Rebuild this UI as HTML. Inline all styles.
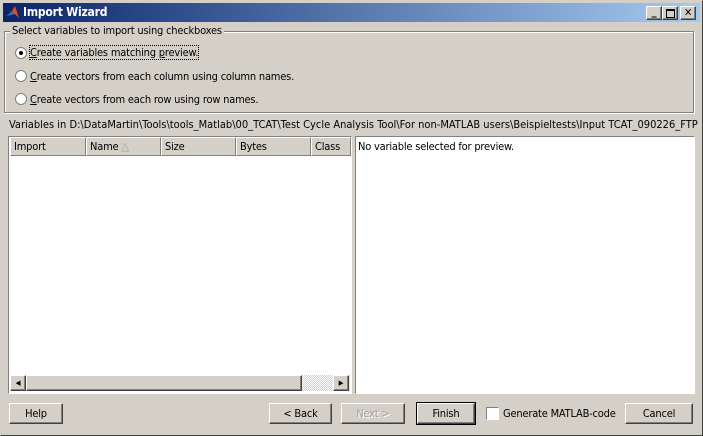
<html><head><style>
body{margin:0;width:703px;height:436px;background:#d4d0c8;font-family:Tahoma,"DejaVu Sans Condensed","Liberation Sans",sans-serif;font-size:11px;position:relative;overflow:hidden;letter-spacing:-0.2px}
.a{position:absolute}
.btn{position:absolute;height:21px;background:#d4d0c8;border:1px solid;border-color:#fff #404040 #404040 #fff;box-shadow:inset -1px -1px 0 #808080;text-align:center;line-height:20px;box-sizing:border-box}
.rad{position:absolute;left:15px;width:12px;height:12px;border-radius:50%;background:#fff;border:1px solid #808080;box-sizing:border-box}
.hd{position:absolute;top:0;height:19px;border:1px solid;border-color:#fff #808080 #808080 #fff;box-sizing:border-box;padding-left:3px;line-height:18px;background:#d4d0c8}
</style></head><body>
<div class="a" style="left:0;top:0;width:701px;height:434px;border:1px solid;border-color:#d4d0c8 #404040 #404040 #d4d0c8"></div>
<div class="a" style="left:3px;top:3px;width:697px;height:19px;background:linear-gradient(90deg,#0a246a,#a6caf0)"></div>
<svg class="a" style="left:6px;top:5px" width="14" height="14"><path d="M1 11 L6 6 L9 1 L13 13 L9 9 Z" fill="#e05010"/><path d="M1 11 L6 6 L8 9Z" fill="#3070c0"/></svg>
<div class="a" style="left:23px;top:5px;color:#fff;font-weight:bold;font-size:12px">Import Wizard</div>
<div class="btn" style="left:646px;top:6px;width:16px;height:14px;line-height:10px;font-weight:bold">_</div>
<div class="btn" style="left:662px;top:6px;width:16px;height:14px"><div class="a" style="left:3px;top:2px;width:7px;height:6px;border:1px solid #000;border-top-width:2px"></div></div>
<div class="btn" style="left:680px;top:6px;width:16px;height:14px;line-height:12px;font-weight:bold">✕</div>
<div class="a" style="left:4px;top:31px;width:688px;height:80px;border:1px solid #808080;box-shadow:1px 1px 0 #fff,inset 1px 1px 0 #fff"></div>
<div class="a" style="left:10px;top:24px;background:#d4d0c8;padding:0 2px">Select variables to import using checkboxes</div>
<div class="rad" style="top:47px"><div class="a" style="left:3px;top:3px;width:4px;height:4px;border-radius:50%;background:#000"></div></div>
<div class="a" style="left:30px;top:46px;outline:1px dotted #000"><u>C</u>reate variables matching <u>p</u>review.</div>
<div class="rad" style="top:70px"></div>
<div class="a" style="left:30px;top:70px"><u>C</u>reate vectors from each column using column names.</div>
<div class="rad" style="top:93px"></div>
<div class="a" style="left:30px;top:93px"><u>C</u>reate vectors from each row using row names.</div>
<div class="a" style="left:9px;top:118px;white-space:nowrap;letter-spacing:0">Variables in D:\DataMartin\Tools\tools_Matlab\00_TCAT\Test Cycle Analysis Tool\For non-MATLAB users\Beispieltests\Input TCAT_090226_FTP</div>
<div class="a" style="left:8px;top:136px;width:344px;height:258px;background:#fff;border:1px solid;border-color:#808080 #fff #fff #808080;box-sizing:border-box">
<div class="hd" style="left:1px;width:76px">Import</div>
<div class="hd" style="left:77px;width:75px">Name <span style="color:#a0a0a0">△</span></div>
<div class="hd" style="left:152px;width:75px">Size</div>
<div class="hd" style="left:227px;width:75px">Bytes</div>
<div class="hd" style="left:302px;width:40px">Class</div>
<div class="a" style="left:1px;top:238px;width:340px;height:16px;background:#e8e6e0"></div>
<div class="btn" style="left:1px;top:238px;width:16px;height:16px;font-size:7px;line-height:14px">◀</div>
<div class="btn" style="left:17px;top:238px;width:276px;height:16px"></div>
<div class="a" style="left:293px;top:238px;width:31px;height:16px;background:repeating-conic-gradient(#fff 0 25%,#d4d0c8 0 50%) 0 0/2px 2px"></div>
<div class="btn" style="left:324px;top:238px;width:16px;height:16px;font-size:7px;line-height:14px">▶</div>
</div>
<div class="a" style="left:355px;top:136px;width:340px;height:258px;background:#fff;border:1px solid;border-color:#808080 #fff #fff #808080;box-sizing:border-box;padding:3px 2px">No variable selected for preview.</div>
<div class="btn" style="left:9px;top:403px;width:54px">Help</div>
<div class="btn" style="left:269px;top:403px;width:63px">&lt; Back</div>
<div class="btn" style="left:341px;top:403px;width:64px;color:#a0a0a0;text-shadow:1px 1px #fff">Next &gt;</div>
<div class="btn" style="left:417px;top:403px;width:58px;outline:1px solid #000">Finish</div>
<div class="a" style="left:486px;top:407px;width:13px;height:13px;background:#fff;border:1px solid;border-color:#808080 #fff #fff #808080;box-sizing:border-box"></div>
<div class="a" style="left:503px;top:407px">Generate MATLAB-code</div>
<div class="btn" style="left:625px;top:403px;width:68px">Cancel</div>
</body></html>
